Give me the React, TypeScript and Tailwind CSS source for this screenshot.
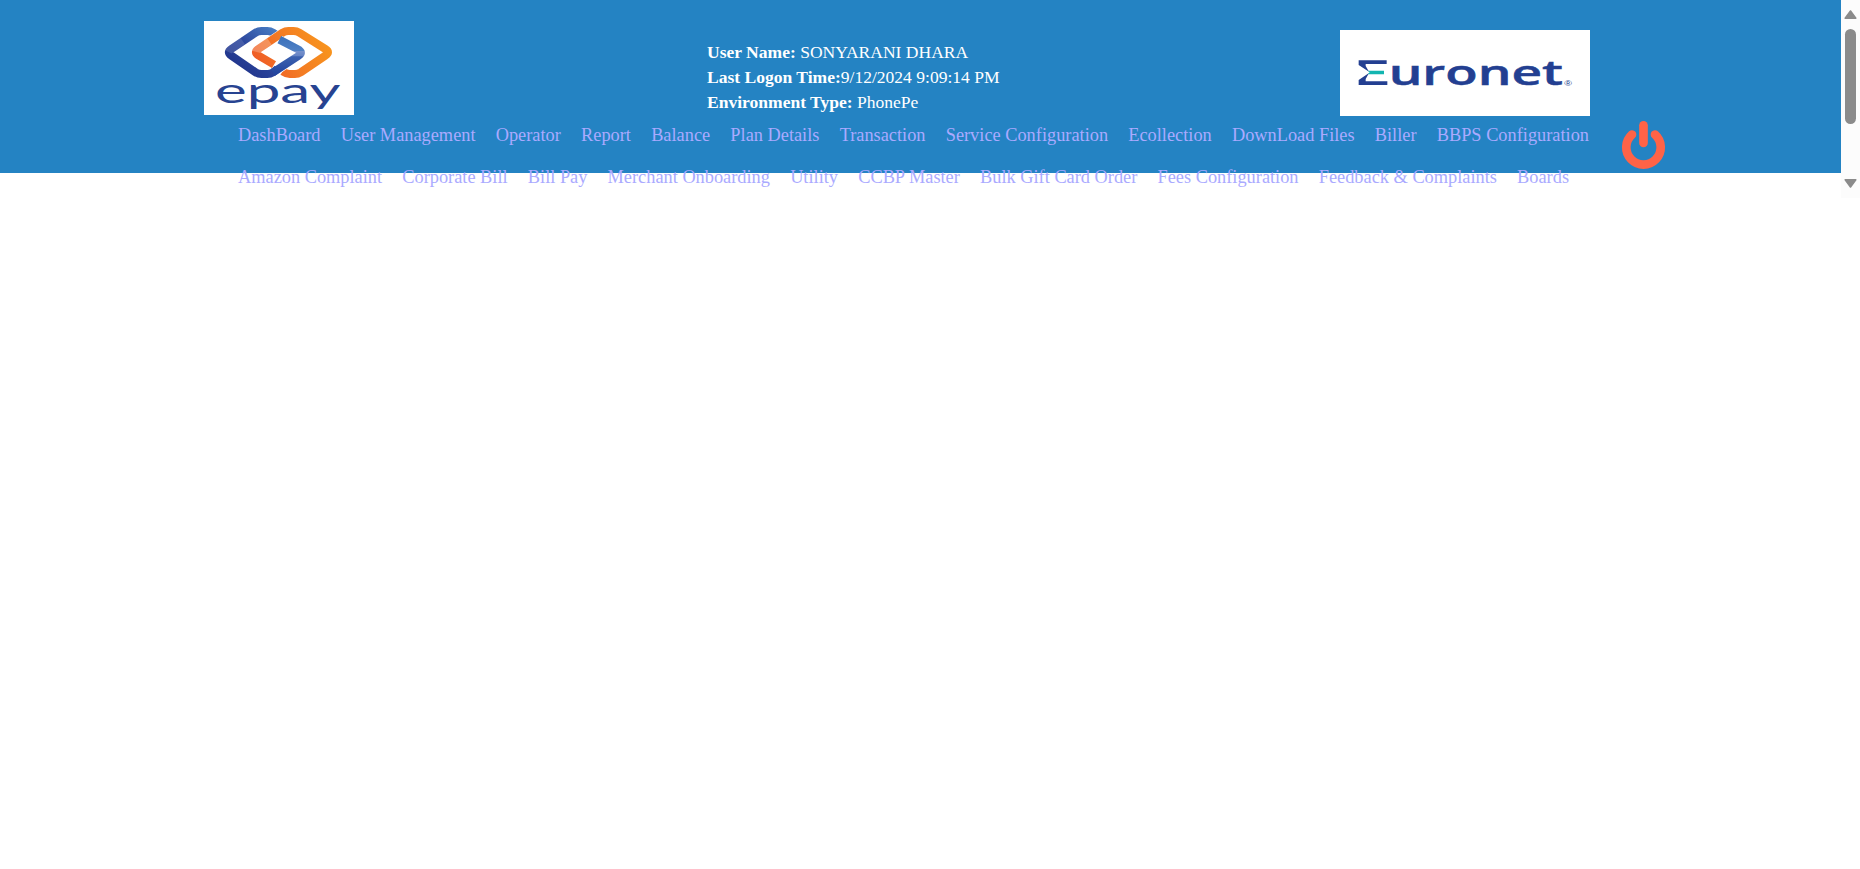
const rows = [
  ["DashBoard", "User Management", "Operator", "Report", "Balance", "Plan Details", "Transaction", "Service Configuration", "Ecollection", "DownLoad Files", "Biller", "BBPS Configuration"],
  ["Amazon Complaint", "Corporate Bill", "Bill Pay", "Merchant Onboarding", "Utility", "CCBP Master", "Bulk Gift Card Order", "Fees Configuration", "Feedback & Complaints", "Boards"],
];

function EpayLogo() {
  return (
    <svg className="mt-[21px] h-[94px] w-[150px] bg-white" viewBox="42 33 450 282">
      <defs>
        <linearGradient id="blueLeft" x1="0" y1="1" x2="1" y2="0">
          <stop offset="0" stopColor="#1d2f86" />
          <stop offset="0.5" stopColor="#2b459c" />
          <stop offset="1" stopColor="#4a7fc4" />
        </linearGradient>
        <linearGradient id="blueRight" x1="0" y1="0" x2="0" y2="1">
          <stop offset="0" stopColor="#3f74bd" />
          <stop offset="0.34" stopColor="#4f80c4" />
          <stop offset="0.36" stopColor="#7590cb" />
          <stop offset="0.5" stopColor="#6583c4" />
          <stop offset="0.52" stopColor="#3c62b0" />
          <stop offset="1" stopColor="#2446a0" />
        </linearGradient>
        <linearGradient id="orange" gradientUnits="userSpaceOnUse" x1="190" y1="190" x2="400" y2="70">
          <stop offset="0" stopColor="#ee5426" />
          <stop offset="0.5" stopColor="#f37a24" />
          <stop offset="1" stopColor="#f8951d" />
        </linearGradient>
      </defs>
      <g fill="none" strokeLinejoin="round" strokeWidth="24">
        <path d="M268 80 L249 68 Q241 63 232 63 H214 Q205 63 197 68 L124 117 Q109 127 124 137 L197 187 Q205 192 214 192 H232 Q241 192 249 187 L262 177" stroke="url(#blueLeft)" />
        <path d="M252 164 L206 137 Q190 127 205 117 L278 68 Q286 63 295 63 H311 Q320 63 328 68 L406 117 Q422 127 406 137 L332 187 Q324 192 315 192 H299 Q290 192 280 184" stroke="#fff" strokeWidth="27" />
        <path d="M252 164 L206 137 Q190 127 205 117 L278 68 Q286 63 295 63 H311 Q320 63 328 68 L406 117 Q422 127 406 137 L332 187 Q324 192 315 192 H299 Q290 192 278 184" stroke="url(#orange)" />
        <path d="M270 90 L322 117 Q342 127 325 138 L266 177" stroke="#fff" strokeWidth="27" />
        <path d="M268 89 L322 117 Q342 127 325 138 L249 187" stroke="url(#blueRight)" />
        <path d="M197 125 Q198 121 205 117 L238 94" stroke="#fff" strokeOpacity="0.25" />
        <path d="M114 125 Q116 121 124 117 L158 93" stroke="#fff" strokeOpacity="0.13" />
      </g>
      <text x="75" y="278" fill="#274391" fontFamily="Lato, sans-serif" fontSize="104" textLength="376" lengthAdjust="spacingAndGlyphs">epay</text>
    </svg>
  );
}

function EuronetLogo() {
  return (
    <svg className="mt-[30px] h-[86px] w-[250px] bg-white" viewBox="60 30 750 258">
      <path d="M116 121 H200 V132 H137 V138 L147 155 L116 135 Z M116 195 V180 L147 159 L137 177 V184 H202 V195 Z" fill="#233f91" />
      <path d="M143 152 H192 V163 H143 L149 157 Z" fill="#12b5b0" />
      <text x="206" y="195" fill="#233f91" stroke="#233f91" strokeWidth="1.5" fontFamily="Open Sans, sans-serif" fontWeight="600" fontSize="105" textLength="523" lengthAdjust="spacingAndGlyphs">uronet</text>
      <text x="733" y="197" fill="#233f91" fontFamily="Liberation Sans, sans-serif" fontSize="24" textLength="23" lengthAdjust="spacingAndGlyphs">®</text>
    </svg>
  );
}

function PowerIcon() {
  return (
    <svg className="mt-[5px] size-[48px]" viewBox="87 33 144 144" fill="none" stroke="#ff6347" strokeWidth="26" strokeLinecap="round">
      <path d="M160.5 46 V99" />
      <path d="M126 73.5 A51.7 51.7 0 1 0 195 73.5" />
    </svg>
  );
}

function Scrollbar() {
  return (
    <div className="flex h-[198px] w-[19px] flex-col items-center bg-[#fcfcfc]">
      <svg className="mt-[9px] h-[11px] w-[13px]" viewBox="0 0 13 11">
        <path d="M6.5 2 L11.8 9.2 H1.2 Z" fill="#8b8b8b" stroke="#8b8b8b" strokeWidth="1.6" strokeLinejoin="round" />
      </svg>
      <div className="mt-[9px] h-[95px] w-[11px] rounded-full bg-[#8b8b8b]" />
      <svg className="mt-[54px] h-[11px] w-[13px]" viewBox="0 0 13 11">
        <path d="M6.5 9 L11.8 1.8 H1.2 Z" fill="#8b8b8b" stroke="#8b8b8b" strokeWidth="1.6" strokeLinejoin="round" />
      </svg>
    </div>
  );
}

export default function App() {
  return (
    <div className="flex h-[869px] w-[1860px] items-start overflow-hidden bg-white font-['Liberation_Serif',serif]">
      <header className="h-[173px] w-[1841px] bg-[#2483c3]">
        <div className="flex h-[116px] items-start pl-[204px]">
          <EpayLogo />
          <div className="mt-[40px] ml-[353px] w-[633px] text-[17.55px] leading-[25px] text-white">
            <p><b>User Name:</b> SONYARANI DHARA</p>
            <p><b>Last Logon Time:</b>9/12/2024 9:09:14 PM</p>
            <p><b>Environment Type:</b> PhonePe</p>
          </div>
          <EuronetLogo />
        </div>
        <div className="flex items-start pl-[238px]">
          <nav className="w-[1381px] text-[18.34px] leading-[42px] text-[#aaaaff]">
            {rows.map((row) => (
              <ul key={row[0]} className="-mt-[2px] mb-[2px] flex gap-[20.2px] whitespace-nowrap">
                {row.map((item) => (
                  <li key={item}><a>{item}</a></li>
                ))}
              </ul>
            ))}
          </nav>
          <PowerIcon />
        </div>
      </header>
      <Scrollbar />
    </div>
  );
}
